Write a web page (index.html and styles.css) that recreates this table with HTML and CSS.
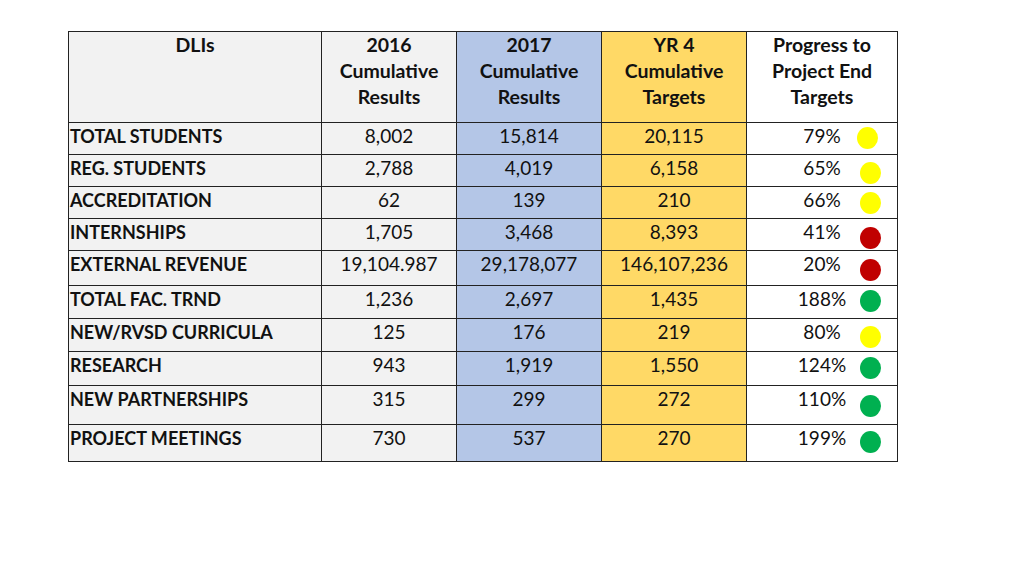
FILE: index.html
```html
<!DOCTYPE html>
<html>
<head>
<meta charset="utf-8">
<link rel="stylesheet" href="styles.css">
</head>
<body>
<div class="page">
<table class="dli">
  <colgroup>
    <col class="c-name"><col class="c-2016"><col class="c-2017"><col class="c-yr4"><col class="c-prog">
  </colgroup>
  <thead>
    <tr class="h-head">
      <th class="gray">DLIs</th>
      <th class="gray">2016<br>Cumulative<br>Results</th>
      <th class="blue">2017<br>Cumulative<br>Results</th>
      <th class="gold">YR 4<br>Cumulative<br>Targets</th>
      <th class="white">Progress to<br>Project End<br>Targets</th>
    </tr>
  </thead>
  <tbody>
    <tr class="h32"><td class="label gray">TOTAL STUDENTS</td><td class="gray">8,002</td><td class="blue">15,814</td><td class="gold">20,115</td><td class="white prog">79%<span class="dot yellow t15 l110"></span></td></tr>
    <tr class="h32"><td class="label gray">REG. STUDENTS</td><td class="gray">2,788</td><td class="blue">4,019</td><td class="gold">6,158</td><td class="white prog">65%<span class="dot yellow t18"></span></td></tr>
    <tr class="h32"><td class="label gray">ACCREDITATION</td><td class="gray">62</td><td class="blue">139</td><td class="gold">210</td><td class="white prog">66%<span class="dot yellow t16"></span></td></tr>
    <tr class="h32"><td class="label gray">INTERNSHIPS</td><td class="gray">1,705</td><td class="blue">3,468</td><td class="gold">8,393</td><td class="white prog">41%<span class="dot red t19"></span></td></tr>
    <tr class="h35"><td class="label gray">EXTERNAL REVENUE</td><td class="gray">19,104.987</td><td class="blue">29,178,077</td><td class="gold">146,107,236</td><td class="white prog">20%<span class="dot red t19"></span></td></tr>
    <tr class="h33"><td class="label gray">TOTAL FAC. TRND</td><td class="gray">1,236</td><td class="blue">2,697</td><td class="gold">1,435</td><td class="white prog">188%<span class="dot green t15"></span></td></tr>
    <tr class="h33"><td class="label gray">NEW/RVSD CURRICULA</td><td class="gray">125</td><td class="blue">176</td><td class="gold">219</td><td class="white prog">80%<span class="dot yellow t18"></span></td></tr>
    <tr class="h34"><td class="label gray">RESEARCH</td><td class="gray">943</td><td class="blue">1,919</td><td class="gold">1,550</td><td class="white prog">124%<span class="dot green t16"></span></td></tr>
    <tr class="h39"><td class="label gray">NEW PARTNERSHIPS</td><td class="gray">315</td><td class="blue">299</td><td class="gold">272</td><td class="white prog">110%<span class="dot green t20"></span></td></tr>
    <tr class="h37"><td class="label gray">PROJECT MEETINGS</td><td class="gray">730</td><td class="blue">537</td><td class="gold">270</td><td class="white prog">199%<span class="dot green t17"></span></td></tr>
  </tbody>
</table>
</div>
</body>
</html>
```
FILE: styles.css
```css
html, body {
  margin: 0;
  padding: 0;
  background: #ffffff;
}

.page {
  padding: 31px 0 0 68px;
}

.dli {
  border-collapse: collapse;
  table-layout: fixed;
  width: 829px;
  font-family: Lato, "Open Sans", "Liberation Sans", sans-serif;
  font-size: 18px;
  color: #111111;
}

.c-name { width: 253px; }
.c-2016 { width: 135px; }
.c-2017 { width: 145px; }
.c-yr4 { width: 145px; }
.c-prog { width: 151px; }

.dli th,
.dli td {
  border: 1px solid #222222;
  padding: 0;
  vertical-align: top;
  text-align: center;
}

.dli th {
  font-weight: 700;
  font-size: 19.5px;
  line-height: 26px;
  padding-top: 0;
}

.dli td {
  font-weight: 400;
  font-size: 19px;
  line-height: 22px;
  padding-top: 2px;
}

.dli td.label {
  text-align: left;
  font-weight: 700;
  font-size: 18px;
  padding-top: 2px;
  padding-left: 1px;
}

.h-head { height: 91px; }
.h32 { height: 32px; }
.h33 { height: 33px; }
.h34 { height: 34px; }
.h35 { height: 35px; }
.h37 { height: 37px; }
.h39 { height: 39px; }

.gray { background: #f2f2f2; }
.blue { background: #b4c6e7; }
.gold { background: #ffd966; }
.white { background: #ffffff; }

.prog {
  position: relative;
}

.dot {
  position: absolute;
  left: 113px;
  width: 21px;
  height: 22px;
  border-radius: 50%;
}

.dot.l110 { left: 110px; }

.yellow { background: #ffff00; }
.red { background: #c00000; }
.green { background: #00b050; }

.t15 { top: 4px; }
.t16 { top: 5px; }
.t17 { top: 6px; }
.t18 { top: 7px; }
.t19 { top: 8px; }
.t20 { top: 9px; }
```
